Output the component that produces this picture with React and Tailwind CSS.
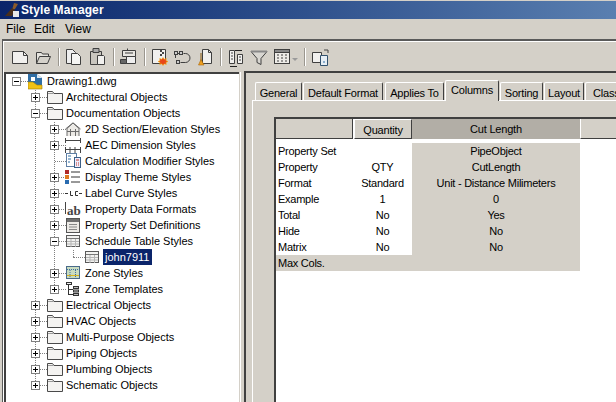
const F = '"Liberation Sans", Arial, sans-serif';

function Box({ open, x, y }) {
  return (
    <div className="absolute w-[9px] h-[9px] border border-[#808080] bg-white" style={{ left: x, top: y }}>
      <div className="absolute left-[1px] top-[3px] w-[5px] h-[1px] bg-black" />
      {!open && <div className="absolute left-[3px] top-[1px] w-[1px] h-[5px] bg-black" />}
    </div>
  );
}
function VDot({ x, y, h }) {
  return <div className="absolute border-l border-dotted border-[#808080]" style={{ left: x, top: y, height: h }} />;
}
function HDot({ x, y, w }) {
  return <div className="absolute border-t border-dotted border-[#808080]" style={{ left: x, top: y, width: w }} />;
}
const Folder = () => (
  <svg width="16" height="14" viewBox="0 0 16 14" className="absolute left-0 top-[1px]">
    <path d="M.5 12.500V.5h5l1.500 2h8.500v10z" fill="#f4f3f1" stroke="#4a4a4a" />
    <path d="M1 2.500h5.500" stroke="#9a9a9a" />
  </svg>
);
const TableIcon = () => (
  <svg width="15" height="14" viewBox="0 0 15 14" className="absolute left-[1px] top-[1px]">
    <rect x=".5" y=".5" width="13" height="11" fill="#f2f2f0" stroke="#5a5a5a" />
    <path d="M1 3.500h12" stroke="#777" />
    <path d="M1 6.500h12M1 9h12M5 4v8M9.500 4v8" stroke="#b5b5b5" />
  </svg>
);
const icons = {
  drawing: (
    <svg width="15" height="16" viewBox="0 0 15 16" className="absolute left-0 top-0">
      <path d="M0 0h9l5 4v7H0z" fill="#2f6ea5" />
      <path d="M9 0l5 4H9z" fill="#dfe8f0" />
      <rect x="3" y="3" width="4" height="4" fill="#fff" />
      <path d="M0 8h5l4 3h5v4H0z" fill="#f2c215" stroke="#a07d0a" strokeWidth=".6" />
    </svg>
  ),
  section: (
    <svg width="16" height="15" viewBox="0 0 16 15" className="absolute left-0 top-0">
      <path d="M2 14V6.500L8 1l6 5.500V14M.5 7L8 .8 15.500 7M2 9.500h12M5.500 7v7M10.500 7v7" fill="#eceae6" stroke="#6c6c6c" />
    </svg>
  ),
  dim: (
    <svg width="16" height="15" viewBox="0 0 16 15" className="absolute left-0 top-0">
      <path d="M.5 0v5M15.500 0v5M1 2.500h14M.5 9v6M15.500 9v6M5 9v6M10 9v6M1 11.500h14" stroke="#444" fill="none" />
    </svg>
  ),
  calc: (
    <svg width="16" height="15" viewBox="0 0 16 15" className="absolute left-[1px] top-[-1px]">
      <rect x=".5" y=".5" width="10" height="13" fill="#fff" stroke="#5f7fa5" />
      <path d="M2 3h3M2 6h3M2 9h2" stroke="#2f6ea5" />
      <rect x="8.500" y="4.500" width="6" height="10" fill="#eef" stroke="#3c5f86" />
      <path d="M10 7h3M10 10h1M12 10h1M10 12h1M12 12h1" stroke="#c0392b" />
    </svg>
  ),
  theme: (
    <svg width="16" height="15" viewBox="0 0 16 15" className="absolute left-0 top-0">
      <rect x="0" y="0" width="4" height="4" fill="#b02a2a" />
      <rect x="0" y="5" width="4" height="4" fill="#e07a1f" />
      <rect x="0" y="10" width="4" height="4" fill="#2a6cb0" />
      <path d="M6 2h9M6 7h9M6 12h9" stroke="#333" />
    </svg>
  ),
  curve: (
    <svg width="17" height="8" viewBox="0 0 17 8" className="absolute left-0 top-[4px]">
      <path d="M0 3.500h3M14 3.500h3" stroke="#333" />
      <path d="M5.500 1v4.500H8M13 1.500h-2.500v4H13" stroke="#333" fill="none" />
    </svg>
  ),
  ab: (
    <div className="absolute left-0 top-0 w-[17px] h-[16px]">
      <div className="absolute left-0 top-0 w-[1px] h-[12px] bg-[#444]" />
      <span className="absolute left-[2px] top-[2px] text-[13px] leading-[14px] font-bold text-[#444]" style={{ fontFamily: '"Liberation Serif", serif' }}>ab</span>
    </div>
  ),
  propset: (
    <svg width="15" height="16" viewBox="0 0 15 16" className="absolute left-[1px] top-0">
      <rect x=".5" y=".5" width="13" height="14" fill="#eceae6" stroke="#555" />
      <rect x="1" y="1" width="12" height="3" fill="#6f6f6f" />
      <path d="M3 6.500h8M3 9h8M3 11.500h8" stroke="#888" />
    </svg>
  ),
  table: <TableIcon />,
  zone: (
    <svg width="15" height="15" viewBox="0 0 15 15" className="absolute left-[1px] top-0">
      <rect x=".5" y=".5" width="13" height="12" fill="#c9dcc0" stroke="#4a6a8a" />
      <path d="M1 3.500h12M4 4v8M9.500 4v8" stroke="#3c6da0" strokeDasharray="1 1" />
      <path d="M1 9.500h12" stroke="#d8b520" />
    </svg>
  ),
  ztemp: (
    <svg width="15" height="16" viewBox="0 0 15 16" className="absolute left-[1px] top-0">
      <path d="M2.500 3v10M3 7.500h4M3 12.500h4" stroke="#333" fill="none" />
      <rect x=".5" y=".5" width="5" height="2" fill="#eee" stroke="#333" />
      <rect x="7.500" y="4.500" width="5" height="2" fill="#bbb" stroke="#333" />
      <rect x="7.500" y="8" width="5" height="2" fill="#bbb" stroke="#333" />
      <rect x="7.500" y="11.500" width="5" height="2" fill="#bbb" stroke="#333" />
    </svg>
  ),
  folder: <Folder />,
};

const rows = [
  { l: 1, t: 'Drawing1.dwg', i: 'drawing', y: 81, open: true },
  { l: 2, t: 'Architectural Objects', i: 'folder', y: 97 },
  { l: 2, t: 'Documentation Objects', i: 'folder', y: 113, open: true },
  { l: 3, t: '2D Section/Elevation Styles', i: 'section', y: 129 },
  { l: 3, t: 'AEC Dimension Styles', i: 'dim', y: 145 },
  { l: 3, t: 'Calculation Modifier Styles', i: 'calc', y: 161, leaf: true },
  { l: 3, t: 'Display Theme Styles', i: 'theme', y: 177 },
  { l: 3, t: 'Label Curve Styles', i: 'curve', y: 193 },
  { l: 3, t: 'Property Data Formats', i: 'ab', y: 209 },
  { l: 3, t: 'Property Set Definitions', i: 'propset', y: 225 },
  { l: 3, t: 'Schedule Table Styles', i: 'table', y: 241, open: true },
  { l: 4, t: 'john7911', i: 'table', y: 257, leaf: true, sel: true },
  { l: 3, t: 'Zone Styles', i: 'zone', y: 273 },
  { l: 3, t: 'Zone Templates', i: 'ztemp', y: 289 },
  { l: 2, t: 'Electrical Objects', i: 'folder', y: 305 },
  { l: 2, t: 'HVAC Objects', i: 'folder', y: 321 },
  { l: 2, t: 'Multi-Purpose Objects', i: 'folder', y: 337 },
  { l: 2, t: 'Piping Objects', i: 'folder', y: 353 },
  { l: 2, t: 'Plumbing Objects', i: 'folder', y: 369 },
  { l: 2, t: 'Schematic Objects', i: 'folder', y: 385 },
];

const boxX = { 1: 12, 2: 31, 3: 50, 4: 69 };
const iconX = { 1: 28, 2: 47, 3: 65, 4: 84 };
const textX = { 1: 47, 2: 66, 3: 85, 4: 104 };

function Tree() {
  return (
    <>
      <VDot x={35} y={90} h={295} />
      <VDot x={54} y={122} h={167} />
      <VDot x={73} y={250} h={7} />
      {rows.map((r) => (
        <div key={r.t}>
          <HDot x={r.l === 4 ? 73 : boxX[r.l] + 5} y={r.y} w={r.l === 4 ? 12 : 11} />
          {!r.leaf && <Box open={r.open} x={boxX[r.l]} y={r.y - 4} />}
          <div className="absolute w-[18px] h-[16px]" style={{ left: iconX[r.l], top: r.y - 7 }}>{icons[r.i]}</div>
          <div
            className={`absolute h-[16px] leading-[16px] text-[11px] whitespace-nowrap ${r.sel ? 'bg-[#0a246a] text-white w-[49px] pl-[2px]' : 'text-black'}`}
            style={{ left: r.sel ? textX[r.l] - 1 : textX[r.l], top: r.y - 8 }}
          >
            {r.t}
          </div>
        </div>
      ))}
    </>
  );
}

const Sep = ({ x }) => (
  <>
    <div className="absolute top-[48px] h-[18px] w-[1px] bg-[#9a968e]" style={{ left: x }} />
    <div className="absolute top-[48px] h-[18px] w-[1px] bg-white" style={{ left: x + 1 }} />
  </>
);

function Toolbar() {
  return (
    <svg width="340" height="24" viewBox="0 0 340 24" className="absolute left-0 top-[45px]">
      <g fill="none" stroke="#3f3f3f">
        <path d="M12.500 6.500h11l4 4v8h-15z" fill="#f1f0ee" /><path d="M23.500 6.500v4h4" />
        <path d="M36.500 18.500v-11h5l1 1.500h6v3" fill="#e6e4df" /><path d="M36.500 18.500l3-7h11l-3 7z" fill="#d5d2cb" />
        <path d="M66.500 4.500h6l3 3v11h-9z" fill="#eee" /><path d="M71.500 8.500h6l3 3v8h-9z" fill="#f5f5f3" />
        <path d="M90.500 6.500h11v13h-11z" fill="#c9c6bf" /><path d="M93 3.500h6v4h-6z" fill="#aaa" /><path d="M97.500 10.500h6l1 1v8h-7z" fill="#f1f0ee" />
        <path d="M122.500 5.500h13v6h-13zM127.500 3.500v2M125 8h8" fill="#e9e7e2" /><path d="M126.500 11.500h9v7h-9z" fill="#eee" /><path d="M120.500 14.500h6v4h-6z" fill="#666" />
        <path d="M152.500 4.500h13v14h-13z" fill="#f1f0ee" /><path d="M160 5h2v2h-2zM162 7h2v2h-2zM160 9h2v2h-2z" fill="#444" stroke="none" />
        <path d="M183.500 8.500h2a4.500 4.500 0 0 1 0 9h-5M175.500 13V8.500h5" /><rect x="174.500" y="6.500" width="3" height="3" fill="#ccc" /><rect x="179.500" y="6.500" width="3" height="3" fill="#ccc" /><rect x="176.500" y="15.500" width="3" height="3" fill="#ccc" />
        <path d="M202.500 4.500h6l3 3v11h-9z" fill="#f1f0ee" /><path d="M208.500 4.500v3h3" />
        <path d="M229.500 5.500h5v13h-5zM237.500 9.500h5v9h-5z" fill="#f1f0ee" /><path d="M231 8h2M231 11h2M231 14h2M239 12h2M239 15h2" /><path d="M235 5.500h7M230 21.500h7" stroke="#222" />
        <path d="M251 6.500h16l-6 7v6l-4-2v-4z" fill="#d8d6d1" /><path d="M251 6.500h16" strokeWidth="2" stroke="#888" />
        <rect x="274.500" y="4.500" width="15" height="14" fill="#eeece8" /><rect x="274.500" y="4.500" width="15" height="3" fill="#888" /><path d="M277 10h2M281 10h2M285 10h2M277 13h2M281 13h2M285 13h2M277 16h2M281 16h2M285 16h2" />
        <path d="M312.500 7.500h9v10h-9z" fill="#f1f0ee" /><path d="M320.500 10.500h7v10h-7z" fill="#e6eef5" stroke="#32526f" /><path d="M323 17h2" stroke="#2f6ea5" /><path d="M324 5h4v3" stroke="#444" />
      </g>
      <path d="M201 8v9" stroke="#8a5a10" fill="none" />
      <path d="M198.500 20L201 14.500 204 20z" fill="#f0a01e" stroke="#a8660a" strokeWidth=".6" />
      <path d="M163 12.500l1.300 1.800 2-.8-.3 2.100 2 .9-2 .9.300 2.100-2-.8-1.300 1.800-1.300-1.800-2 .8.300-2.100-2-.9 2-.9-.3-2.100 2 .8z" fill="#e8471a" stroke="#f5b400" strokeWidth=".5" />
      <path d="M292 13h6l-3 3z" fill="#9a9a9a" />
    </svg>
  );
}

const cols = [
  ['Property Set', '', 'PipeObject'],
  ['Property', 'QTY', 'CutLength'],
  ['Format', 'Standard', 'Unit - Distance Milimeters'],
  ['Example', '1', '0'],
  ['Total', 'No', 'Yes'],
  ['Hide', 'No', 'No'],
  ['Matrix', 'No', 'No'],
];

const tabs = [
  ['General', 255, 47],
  ['Default Format', 303, 80],
  ['Applies To', 385, 59],
  ['Sorting', 500, 43],
  ['Layout', 544, 40],
];

export default function App() {
  return (
    <div className="relative w-[616px] h-[402px] overflow-hidden bg-[#d4d0c8] text-[11px] text-black" style={{ fontFamily: F }}>
      <div className="absolute left-0 top-[1px] w-full h-[18px] bg-gradient-to-r from-[#0a246a] to-[#5a7fb0]" />
      <svg width="18" height="16" viewBox="0 0 18 16" className="absolute left-[3px] top-[2px]">
        <path d="M11 1l4 1-3 5-3 1z" fill="#8a5a2b" />
        <path d="M2 14L9 6l3 2-3 6z" fill="#4a2f1a" />
        <rect x="10" y="9" width="6" height="6" fill="#e8e8e8" />
      </svg>
      <div className="absolute left-[21px] top-[1px] h-[18px] leading-[18px] text-[12px] tracking-[0.1px] font-bold text-white">Style Manager</div>

      <div className="absolute left-[6px] top-[20px] leading-[18px] text-[12px]">File</div>
      <div className="absolute left-[34px] top-[20px] leading-[18px] text-[12px]">Edit</div>
      <div className="absolute left-[65px] top-[20px] leading-[18px] text-[12px]">View</div>

      <div className="absolute left-[2px] top-[39px] right-0 h-[2px] bg-[#5a5a5a]" />
      <div className="absolute left-[3px] top-[41px] right-0 h-[1px] bg-white" />
      <div className="absolute left-[2px] top-[39px] bottom-0 w-[1px] bg-[#5a5a5a]" />
      <div className="absolute left-[3px] top-[41px] bottom-0 w-[1px] bg-white" />

      <Toolbar />
      <Sep x={58} /><Sep x={113} /><Sep x={144} /><Sep x={220} /><Sep x={304} />

      <div className="absolute left-[4px] top-[72px] w-[236px] bottom-[-2px] bg-white border-l-2 border-t-2 border-[#404040]" />
      <Tree />

      <div className="absolute left-[239px] top-[72px] w-[1px] bottom-0 bg-[#d4d0c8]" />
      <div className="absolute left-[240px] top-[72px] w-[1px] bottom-0 bg-white" />
      <div className="absolute left-[244px] top-[71px] right-0 h-[2px] bg-[#404040]" />
      <div className="absolute left-[244px] top-[71px] w-[2px] bottom-0 bg-[#404040]" />

      {/* tab page */}
      <div className="absolute left-[252px] top-[100px] right-0 h-[1px] bg-white" />
      <div className="absolute left-[252px] top-[100px] w-[1px] bottom-0 bg-white" />
      {tabs.map(([t, x, w]) => (
        <div
          key={t}
          className="absolute top-[82px] h-[18px] leading-[20px] tracking-[-0.2px] text-center border-l border-t border-white border-r border-r-[#404040] rounded-t-[2px] whitespace-nowrap"
          style={{ left: x, width: w }}
        >
          {t}
        </div>
      ))}
      <div className="absolute left-[585px] top-[82px] w-[40px] h-[18px] leading-[20px] pl-[7px] tracking-[-0.2px] border-l border-t border-white rounded-t-[2px] whitespace-nowrap">Class</div>
      <div className="absolute left-[445px] top-[80px] w-[54px] h-[21px] bg-[#d4d0c8] border-l border-t border-white border-r border-r-[#404040] text-center leading-[19px] tracking-[-0.2px] rounded-t-[2px]">Columns</div>

      {/* grid */}
      <div className="absolute left-[274px] top-[117px] right-0 bottom-0 bg-white border-l-2 border-t-2 border-[#404040]" />
      <div className="absolute left-[276px] top-[119px] w-[77px] h-[20px] bg-[#d4d0c8] border-b border-r border-[#404040]" />
      <div className="absolute left-[354px] top-[119px] w-[58px] h-[20px] bg-[#d4d0c8] border border-t-white border-l-white border-b-[#404040] border-r-[#404040] text-center leading-[20px] tracking-[-0.2px]">Quantity</div>
      <div className="absolute left-[412px] top-[119px] w-[168px] h-[20px] bg-[#b2aea6] text-center leading-[20px] tracking-[-0.2px]">Cut Length</div>
      <div className="absolute left-[580px] top-[119px] right-0 h-[20px] bg-[#d4d0c8] border-l border-white border-b border-b-[#404040]" />
      <div className="absolute left-[412px] top-[143px] w-[168px] h-[112px] bg-[#d4d0c8]" />
      <div className="absolute left-[276px] top-[255px] w-[304px] h-[16px] bg-[#d4d0c8]" />
      {cols.map((c, i) => (
        <div key={c[0]} className="tracking-[-0.25px]">
          <div className="absolute left-[278px] h-[16px] leading-[16px] whitespace-nowrap" style={{ top: 143 + i * 16 }}>{c[0]}</div>
          <div className="absolute left-[354px] w-[57px] h-[16px] leading-[16px] text-center whitespace-nowrap" style={{ top: 143 + i * 16 }}>{c[1]}</div>
          <div className="absolute left-[412px] w-[168px] h-[16px] leading-[16px] text-center whitespace-nowrap" style={{ top: 143 + i * 16 }}>{c[2]}</div>
        </div>
      ))}
      <div className="absolute left-[278px] top-[255px] leading-[16px] tracking-[-0.25px]">Max Cols.</div>
    </div>
  );
}
